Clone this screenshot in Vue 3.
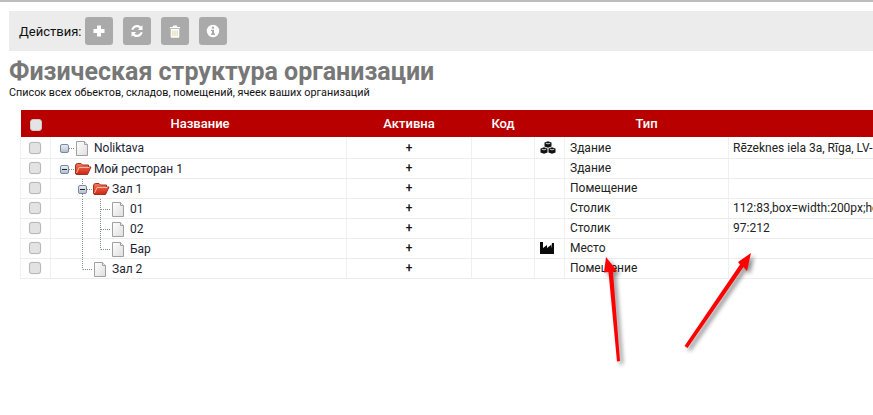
<script setup>
const rows = [
  { id: 1, name: 'Noliktava', tree: ['toggle-plus', 'doc'], type: 'Здание', addr: 'Rēzeknes iela 3a, Rīga, LV-', mark: 'cubes' },
  { id: 2, name: 'Мой ресторан 1', tree: ['toggle-minus', 'folder'], type: 'Здание', addr: '' },
  { id: 3, name: 'Зал 1', tree: ['blank', 'toggle-minus-line', 'folder'], type: 'Помещение', addr: '' },
  { id: 4, name: '01', tree: ['blank', 'line', 'tee', 'doc'], type: 'Столик', addr: '112:83,box=width:200px;he' },
  { id: 5, name: '02', tree: ['blank', 'line', 'tee', 'doc'], type: 'Столик', addr: '97:212' },
  { id: 6, name: 'Бар', tree: ['blank', 'line', 'elbow', 'doc'], type: 'Место', addr: '', mark: 'industry' },
  { id: 7, name: 'Зал 2', tree: ['blank', 'elbow', 'doc'], type: 'Помещение', addr: '' },
]
</script>

<template>
  <div class="page">
    <div class="toolbar">
      <span class="toolbar-label">Действия:</span>
      <button class="tool" type="button" aria-label="Добавить">
        <svg width="14" height="14" viewBox="0 0 14 14"><path d="M5 1.500h4V5h3.500v4H9v3.500H5V9H1.500V5H5z" fill="#fff" /></svg>
      </button>
      <button class="tool" type="button" aria-label="Обновить">
        <svg width="16" height="16" viewBox="0 0 16 16"><path d="M2.300 6.800C2.900 3.900 5.200 2 8 2c1.600 0 3 .6 4.100 1.600L13.500 2.200V7H8.800l1.700-1.700C9.800 4.700 8.900 4.300 8 4.300 6.300 4.300 4.900 5.300 4.500 6.800zM13.700 9.200C13.100 12.100 10.800 14 8 14c-1.600 0-3-.6-4.100-1.600L2.500 13.800V9h4.700l-1.700 1.700c.7.600 1.600 1 2.500 1 1.700 0 3.100-1 3.500-2.500z" fill="#fff" /></svg>
      </button>
      <button class="tool" type="button" aria-label="Удалить">
        <svg width="12" height="15" viewBox="0 0 14 16"><path d="M5 1h4l.8 1.700H13v1.500H1V2.700h3.200zM2 5.200h10V14.200a1 1 0 0 1-1 1H3a1 1 0 0 1-1-1z" fill="#fff" /><path d="M4.500 6.800v6.700M7 6.800v6.700M9.500 6.800v6.700" stroke="#d9cf9c" stroke-width="1.100" /></svg>
      </button>
      <button class="tool" type="button" aria-label="Сведения">
        <svg width="14" height="14" viewBox="0 0 14 14"><path fill-rule="evenodd" d="M7 .8a6.200 6.200 0 1 1 0 12.400A6.200 6.200 0 0 1 7 .8zM5.900 2.700v2h2.200v-2zM5 5.700v1.400h1v2.500H5V11h4V9.600H8V5.700z" fill="#fff" /></svg>
      </button>
    </div>

    <h1 class="title">Физическая структура организации</h1>
    <p class="subtitle">Список всех обьектов, складов, помещений, ячеек ваших организаций</p>

    <svg class="defs" width="0" height="0" aria-hidden="true">
      <defs>
        <linearGradient id="box-fill" x1="0" y1="0" x2="0" y2="1">
          <stop offset="0" stop-color="#eef1f5" />
          <stop offset="1" stop-color="#aebccd" />
        </linearGradient>
        <linearGradient id="doc-fill" x1="0" y1="0" x2="1" y2="1">
          <stop offset="0" stop-color="#ffffff" />
          <stop offset="1" stop-color="#dedede" />
        </linearGradient>
        <linearGradient id="folder-fill" x1="0" y1="0" x2="0" y2="1">
          <stop offset="0" stop-color="#f4775c" />
          <stop offset="1" stop-color="#cf2412" />
        </linearGradient>
        <symbol id="i-doc" viewBox="0 0 18 20">
          <path d="M2.500 3.500h8l3 3v11h-11z" fill="url(#doc-fill)" stroke="#a0a0a0" />
          <path d="M10.500 3.500v3h3" fill="#e8e8e8" stroke="#a0a0a0" />
        </symbol>
        <symbol id="i-folder" viewBox="0 0 18 20">
          <path d="M1.500 7Q1.500 4.500 3.500 4.500H7L8.500 6H14.500V8H17L13.500 15.500H3Q1.500 15.500 1.500 14z" fill="url(#folder-fill)" stroke="#a03020" />
          <path d="M2.500 14L5 8.500H15.500" fill="none" stroke="#fbb8a2" />
        </symbol>
      </defs>
    </svg>

    <div class="table-wrap">
      <table class="grid">
        <colgroup>
          <col class="c-check" /><col class="c-name" /><col class="c-active" /><col class="c-code" />
          <col class="c-mark" /><col class="c-type" /><col class="c-addr" />
        </colgroup>
        <thead>
          <tr>
            <th><span class="check check-head"></span></th>
            <th class="th-name">Название</th>
            <th>Активна</th>
            <th>Код</th>
            <th></th>
            <th>Тип</th>
            <th></th>
          </tr>
        </thead>
        <tbody>
          <tr v-for="row in rows" :key="row.id">
            <td class="cell-check"><span class="check"></span></td>
            <td class="cell-name">
              <div class="tree">
                <template v-for="(part, i) in row.tree" :key="i">
                  <span class="tree-part">
                    <svg v-if="part === 'doc'" width="18" height="20"><use href="#i-doc" /></svg>
                    <svg v-else-if="part === 'folder'" width="18" height="20"><use href="#i-folder" /></svg>
                    <svg v-else-if="part !== 'blank'" width="18" height="20" viewBox="0 0 18 20">
                      <g fill="none" stroke="#7d8ba3" stroke-dasharray="1 1">
                        <path v-if="part === 'line'" d="M8.500 0v20" />
                        <path v-if="part === 'tee'" d="M8.500 0v20M9 10.500h9" />
                        <path v-if="part === 'elbow'" d="M8.500 0v10.500M9 10.500h9" />
                        <path v-if="part.startsWith('toggle')" d="M13 10.500h5" />
                        <path v-if="part === 'toggle-minus-line'" d="M8.500 0v5M8.500 15v5" />
                      </g>
                      <g v-if="part.startsWith('toggle')">
                        <rect x="4.500" y="6.500" width="8" height="8" rx="1.500" fill="url(#box-fill)" stroke="#7a899f" />
                        <path v-if="part !== 'toggle-plus'" d="M6 10.500h5" stroke="#20262f" />
                        <path v-else d="M6.500 10.500h4" stroke="#d8dee6" />
                      </g>
                    </svg>
                  </span>
                </template>
                <span class="tree-label">{{ row.name }}</span>
              </div>
            </td>
            <td class="cell-active">+</td>
            <td></td>
            <td class="cell-mark">
              <svg v-if="row.mark === 'cubes'" width="16" height="14" viewBox="0 0 16 14"><path d="M4.500 1.500L8 .2l3.500 1.300v4L8 6.800 4.500 5.500zM.5 7.500L4 6.200l3.500 1.300v4L4 12.800.5 11.500zM8.500 7.500L12 6.200l3.500 1.300v4L12 12.800l-3.500-1.300z" fill="#111" /><path d="M5.800 2.100L8 2.900l2.200-.8M1.800 8.100L4 8.900l2.200-.8M9.800 8.100l2.200.8 2.200-.8" stroke="#fff" stroke-width=".8" fill="none" /></svg>
              <svg v-else-if="row.mark === 'industry'" width="14" height="12" viewBox="0 0 14 12"><path d="M0 0h3v6l4-3v3l4-3v3h.1L12 1h2v11H0z" fill="#0b0b0b" /></svg>
            </td>
            <td class="cell-text">{{ row.type }}</td>
            <td class="cell-text cell-addr">{{ row.addr }}</td>
          </tr>
        </tbody>
      </table>
    </div>

    <svg class="arrows" width="873" height="415" viewBox="0 0 873 415" aria-hidden="true">
      <path d="M606 257L617 271L613 272L620 361L617 361.500L608.500 272L604 272.500z" fill="#f00" />
      <path d="M751 253L747 271L743.500 267L687.500 348L684.500 346L740 264.500L738 262z" fill="#f00" />
    </svg>
  </div>
</template>

<style scoped>
.page {
  position: relative;
  width: 873px;
  height: 415px;
  overflow: hidden;
  background: #fff;
  font-family: Roboto, "Liberation Sans", sans-serif;
  color: #222;
  border-top: 2px solid #bdbdbd;
  box-sizing: border-box;
}
.toolbar {
  display: flex;
  align-items: center;
  gap: 10px;
  height: 40px;
  margin: 9px 0 0 9px;
  padding-left: 10px;
  background: #ececec;
}
.toolbar-label {
  margin-right: -6px;
  font-size: 13px;
  color: #111;
}
.tool {
  display: flex;
  align-items: center;
  justify-content: center;
  width: 28px;
  height: 28px;
  padding: 0;
  border: 0;
  border-radius: 3px;
  background: #aaaaaa;
}
.title {
  margin: 8px 0 0 9px;
  font-size: 25px;
  line-height: 26px;
  font-weight: 700;
  color: #777;
}
.subtitle {
  margin: 1px 0 0 9px;
  font-size: 10.8px;
  line-height: 13px;
  color: #111;
}
.defs {
  position: absolute;
}
.table-wrap {
  margin: 11px 0 0 20px;
  width: 853px;
  overflow: hidden;
}
.grid {
  table-layout: fixed;
  width: 1000px;
  border-collapse: collapse;
  font-size: 12px;
}
.c-check { width: 30px; }
.c-name { width: 296px; }
.c-active { width: 125px; }
.c-code { width: 63px; }
.c-mark { width: 30px; }
.c-type { width: 164px; }
.c-addr { width: 292px; }
th {
  height: 27px;
  padding: 0;
  background: #b90000;
  color: #fff;
  font-size: 13px;
  font-weight: 500;
  text-align: center;
}
.th-name {
  padding-left: 3px;
}
td {
  height: 20px;
  padding: 0;
  box-sizing: border-box;
  border-bottom: 1px solid #ececec;
  border-left: 1px solid #f0f0f0;
  white-space: nowrap;
  overflow: hidden;
}
tbody tr:first-child td {
  height: 21px;
  padding-top: 1px;
}
.cell-check {
  padding-right: 2px;
  text-align: center;
  line-height: 0;
}
.check {
  display: inline-block;
  width: 12px;
  height: 12px;
  box-sizing: border-box;
  border: 1px solid #b8b8b8;
  border-radius: 3px;
  background: #e2e2e2;
  box-shadow: 0 0 1px rgba(0, 0, 0, 0.2);
}
.check-head {
  border-color: #c8c8c8;
  background: #e4e4e4;
  vertical-align: middle;
}
.tree {
  display: flex;
  align-items: center;
  height: 19px;
  padding-left: 5px;
  color: #1c2433;
}
.tree-part {
  display: block;
  width: 18px;
  height: 19px;
  flex: none;
  line-height: 0;
  overflow: hidden;
}
.tree-label {
  margin-left: 2px;
  padding-top: 1px;
}
.cell-active {
  text-align: center;
  font-weight: 500;
  color: #111;
}
.cell-mark {
  padding-left: 5px;
  line-height: 0;
}
.cell-mark svg {
  vertical-align: middle;
}
.cell-text {
  padding-left: 5px;
}
.cell-addr {
  padding-left: 4px;
}
.arrows {
  position: absolute;
  left: 0;
  top: -2px;
  filter: drop-shadow(3px 3px 2px rgba(0, 0, 0, 0.45));
  pointer-events: none;
}
</style>
